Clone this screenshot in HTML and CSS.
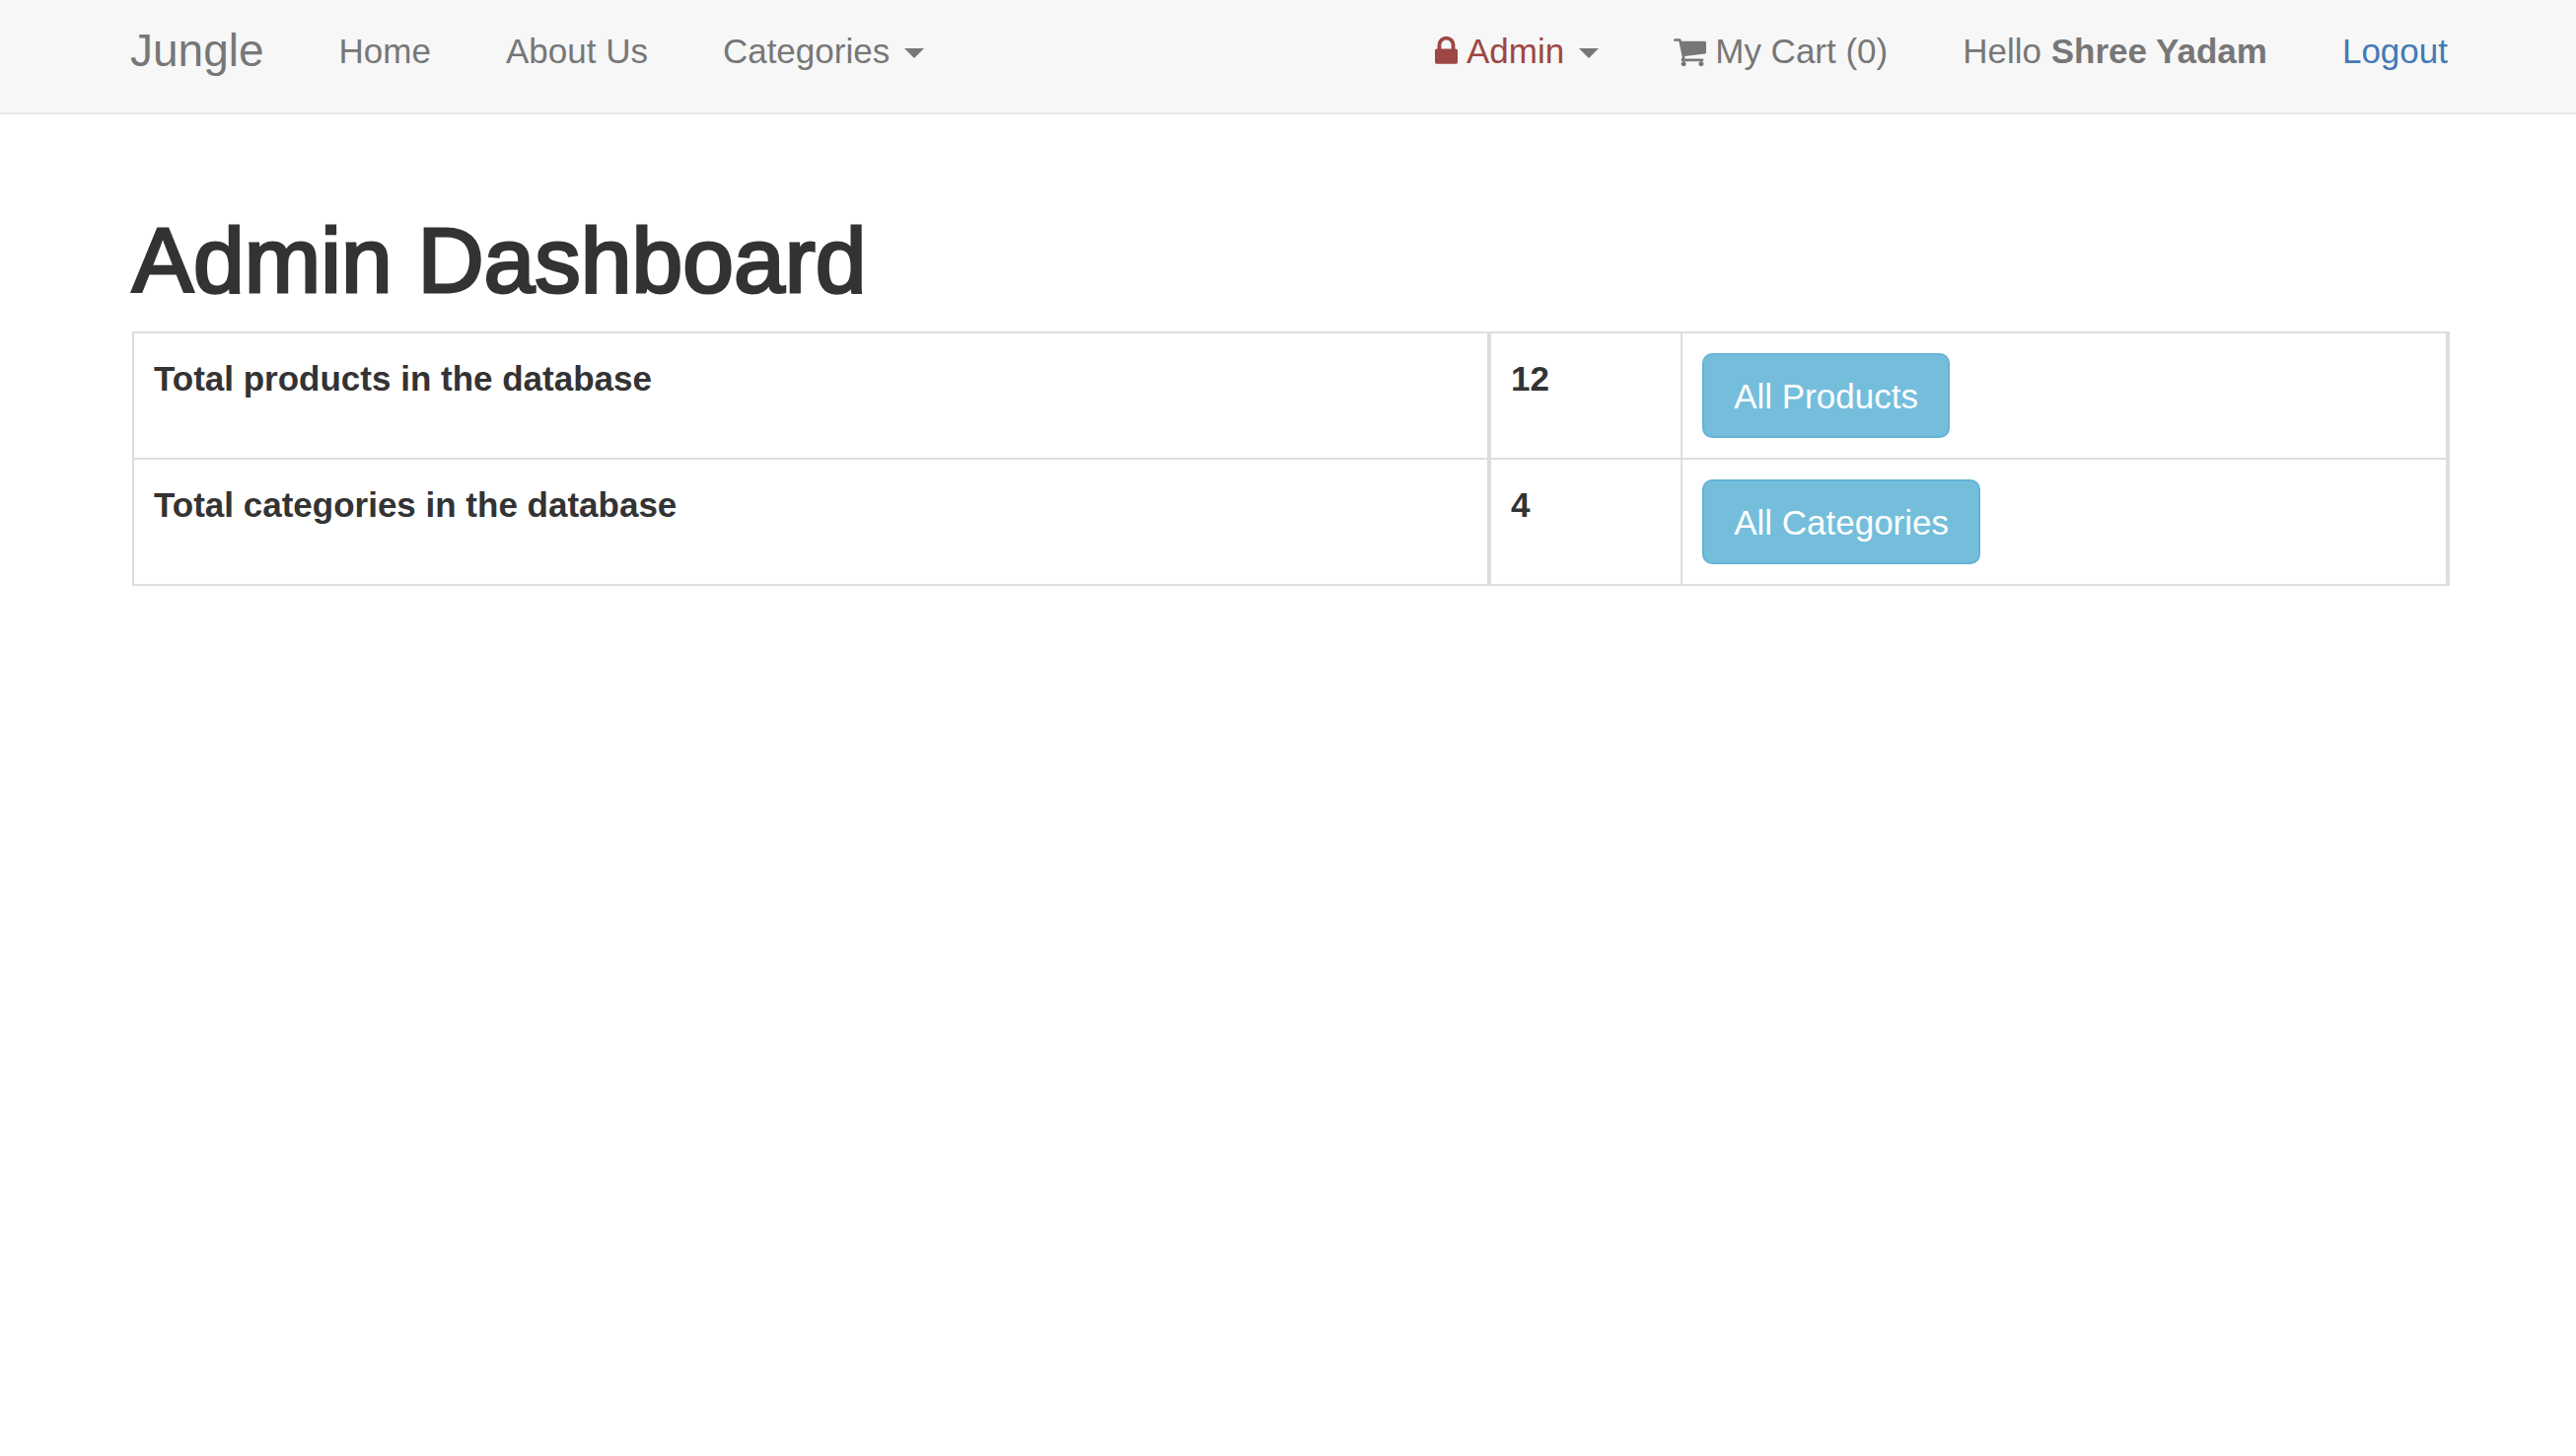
FILE: index.html
```html
<!DOCTYPE html>
<html lang="en">
<head>
  <meta charset="utf-8">
  <meta name="viewport" content="width=device-width, initial-scale=1">
  <title>Jungle</title>
  <link rel="stylesheet" href="styles.css">
</head>
<body>
  <header class="navbar">
    <nav class="nav-group">
      <a class="brand" href="#">Jungle</a>
      <a class="nav-link" href="#">Home</a>
      <a class="nav-link" href="#">About Us</a>
      <button class="nav-link" type="button" aria-haspopup="true">Categories<span class="caret"></span></button>
    </nav>
    <div class="nav-group">
      <button class="nav-link" type="button" aria-haspopup="true"><span class="danger"><svg class="icon icon-lock" viewBox="0 0 1152 1792" aria-hidden="true"><path d="M320 768h512v-192q0-106-75-181t-181-75-181 75-75 181v192zM1152 864v576q0 40-28 68t-68 28h-960q-40 0-68-28t-28-68v-576q0-40 28-68t68-28h32v-192q0-184 132-316t316-132 316 132 132 316v192h32q40 0 68 28t28 68z"/></svg>Admin</span><span class="caret"></span></button>
      <a class="nav-link" href="#"><svg class="icon icon-cart" viewBox="0 0 1664 1792" aria-hidden="true"><path d="M640 1536q0 52-38 90t-90 38-90-38-38-90 38-90 90-38 90 38 38 90zM1536 1536q0 52-38 90t-90 38-90-38-38-90 38-90 90-38 90 38 38 90zM1664 448v512q0 24-16.500 42.500t-40.500 21.500l-1044 122q13 60 13 70 0 16-24 64h920q26 0 45 19t19 45-19 45-45 19h-1024q-26 0-45-19t-19-45q0-11 8-31.500t16-36 21.500-40 15.500-29.500l-177-823h-204q-26 0-45-19t-19-45 19-45 45-19h256q16 0 28.500 6.500t19.500 15.500 13 24.500 8 26 5.500 29.500 4.500 26h1201q26 0 45 19t19 45z"/></svg>My Cart (0)</a>
      <span class="nav-text">Hello <b>Shree Yadam</b></span>
      <a class="nav-link logout" href="#">Logout</a>
    </div>
  </header>
  <main class="content">
    <h1 class="title">Admin Dashboard</h1>
    <table class="summary">
      <colgroup>
        <col class="col-label">
        <col class="col-count">
        <col>
      </colgroup>
      <tbody>
        <tr>
          <th scope="row">Total products in the database</th>
          <td class="count">12</td>
          <td class="action"><a class="btn" href="#">All Products</a></td>
        </tr>
        <tr>
          <th scope="row">Total categories in the database</th>
          <td class="count">4</td>
          <td class="action"><a class="btn" href="#">All Categories</a></td>
        </tr>
      </tbody>
    </table>
  </main>
</body>
</html>
```
FILE: styles.css
```css
* {
  box-sizing: border-box;
}

body {
  margin: 0;
  background: #fff;
  color: #333;
  font: 35px/52px "Helvetica Neue", "Liberation Sans", Arial, sans-serif;
}

a {
  text-decoration: none;
}

.navbar {
  display: flex;
  flex-wrap: wrap;
  justify-content: space-between;
  padding: 26px 130px 36px 132px;
  background: #f7f7f7;
  border-bottom: 2px solid #e6e6e6;
}

.nav-group {
  display: flex;
  flex-wrap: wrap;
  align-items: flex-start;
  gap: 0 76px;
}

.brand {
  color: #777;
  font-size: 46px;
  line-height: 50px;
}

.nav-link,
.nav-text {
  color: #777;
}

.nav-link {
  display: flex;
  align-items: center;
  padding: 0;
  border: 0;
  background: none;
  font: inherit;
  cursor: pointer;
}

.logout {
  color: #447ab5;
}

.danger {
  display: flex;
  align-items: center;
  color: #9d4744;
}

.icon {
  height: 36px;
  margin-right: 9px;
  fill: currentColor;
}

.icon-lock {
  width: 23px;
}

.icon-cart {
  width: 33px;
}

.caret {
  margin: 4px 0 0 15px;
  border: 10px solid transparent;
  border-top-color: #777;
  border-bottom: 0;
}

.content {
  padding: 98px 128px 40px 134px;
}

.title {
  margin: 0 0 22px;
  font-size: 93px;
  font-weight: 500;
  line-height: 100px;
  -webkit-text-stroke: 3px currentColor;
}

.summary {
  width: 100%;
  table-layout: fixed;
  border-collapse: separate;
  border-spacing: 0;
  border-top: 2px solid #ddd;
}

.col-label {
  width: 58.64%;
}

.col-count {
  width: 8.26%;
}

.summary th,
.summary td {
  padding: 20px;
  border: 0 solid #ddd;
  border-bottom-width: 2px;
  text-align: left;
  vertical-align: top;
}

.summary th {
  border-left-width: 2px;
  border-right-width: 4px;
}

.summary .count {
  border-right-width: 2px;
  font-weight: bold;
}

.summary .action {
  border-right-width: 4px;
}

.btn {
  display: block;
  width: fit-content;
  padding: 16px 30px 14px;
  border: 2px solid #62b4d6;
  border-radius: 10px;
  background: #74bedc;
  color: #fff;
}
```
